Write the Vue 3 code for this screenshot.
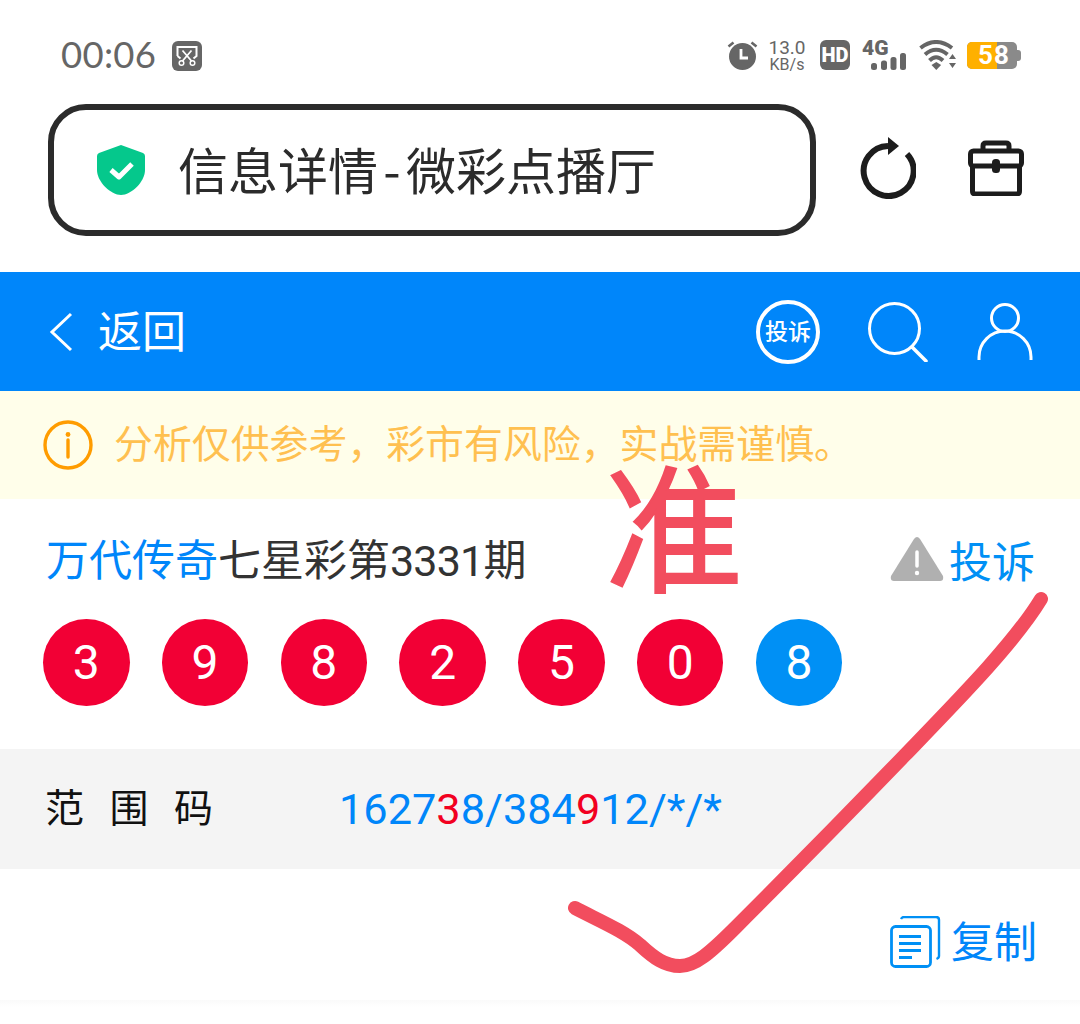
<template>
  <div class="phone">
    <!-- system status bar -->
    <div class="status">
      <span class="clock">00:06</span>
      <svg class="shot" width="30" height="30" viewBox="0 0 30 30">
        <rect width="30" height="30" rx="6" fill="#666" />
        <path d="M5.500 15V6h19v9l-3 2.500M5.500 15l3 2.500" fill="none" stroke="#fff" stroke-width="2" />
        <path d="M10.500 9.500l9 10.500M19.500 9.500l-9 10.500" stroke="#fff" stroke-width="1.800" />
        <circle cx="9.500" cy="22" r="2.300" fill="#666" stroke="#fff" stroke-width="1.500" />
        <circle cx="20.500" cy="22" r="2.300" fill="#666" stroke="#fff" stroke-width="1.500" />
      </svg>
      <div class="spacer"></div>
      <svg class="alarm" width="31" height="30" viewBox="0 0 31 30">
        <circle cx="15.500" cy="16.500" r="13.500" fill="#666" />
        <path d="M1.500 6.500l5-4M29.500 6.500l-5-4" stroke="#666" stroke-width="2.600" />
        <path d="M14 9v9h7" fill="none" stroke="#fff" stroke-width="2.800" />
      </svg>
      <div class="speed"><span>13.0</span><span class="unit">KB/s</span></div>
      <div class="hd">HD</div>
      <div class="net">
        <span class="net-label">4G</span>
        <svg width="44" height="30" viewBox="0 0 44 30">
          <rect x="9" y="23" width="6" height="7" rx="2.500" fill="#666" />
          <rect x="19" y="20.500" width="6" height="9.500" rx="2.500" fill="#666" />
          <rect x="28.500" y="17" width="6" height="13" rx="2.500" fill="#666" />
          <rect x="38" y="13" width="6" height="17" rx="2.500" fill="#666" />
        </svg>
      </div>
      <svg class="wifi" width="38" height="30" viewBox="0 0 38 30">
        <path d="M1.500 8Q17 -4 33 8" fill="none" stroke="#666" stroke-width="4" />
        <path d="M6 14.500Q17 5 28.500 14.500" fill="none" stroke="#666" stroke-width="4" />
        <path d="M10.500 20.500Q17 14 24 20.500" fill="none" stroke="#666" stroke-width="4" />
        <path d="M12.500 25l4.800-3 4.800 3-4.800 5z" fill="#666" />
        <path d="M30 19l3.500-5 3.500 5zM30 23l3.500 5 3.500-5z" fill="#666" />
      </svg>
      <div class="battery">
        <div class="cell"><div class="level"></div><span class="pct">58</span></div>
        <div class="nub"></div>
      </div>
    </div>

    <!-- browser address row -->
    <div class="browser">
      <div class="address">
        <svg width="48" height="50" viewBox="0 0 48 50">
          <path d="M24 0L46 8q2 1 2 3v14c0 12-14 25-24 25S0 37 0 25V11q0-2 2-3z" fill="#05c88c" />
          <path d="M14 25l8 7 13-13" fill="none" stroke="#fff" stroke-width="5" stroke-linejoin="round" />
        </svg>
        <span class="page-title">信息详情<span class="dash">-</span>微彩点播厅</span>
      </div>
      <svg class="reload" width="56" height="62" viewBox="0 0 56 62">
        <path d="M47 17A25 25 0 1 1 28 9" fill="none" stroke="#1c1c1c" stroke-width="6" />
        <path d="M28 0l11 9-11 9z" fill="#1c1c1c" />
      </svg>
      <svg class="toolbox" width="56" height="56" viewBox="0 0 56 56">
        <path d="M15 11V6q0-3 3-3h20q3 0 3 3v5" fill="none" stroke="#1c1c1c" stroke-width="5" />
        <rect x="2.500" y="11" width="51" height="15" rx="3" fill="none" stroke="#1c1c1c" stroke-width="5" />
        <path d="M4.500 26v25q0 3 3 3h41q3 0 3-3V26" fill="none" stroke="#1c1c1c" stroke-width="5" />
        <rect x="24" y="19" width="8" height="14" rx="3.500" fill="#1c1c1c" />
      </svg>
    </div>

    <!-- page header -->
    <header class="nav">
      <svg width="26" height="40" viewBox="0 0 26 40">
        <path d="M23 2L4 20l19 18" fill="none" stroke="#fff" stroke-width="3" />
      </svg>
      <span class="back">返回</span>
      <div class="spacer"></div>
      <div class="badge">投诉</div>
      <svg class="search" width="60" height="60" viewBox="0 0 60 60">
        <circle cx="26.500" cy="26.500" r="25" fill="none" stroke="#fff" stroke-width="3" />
        <path d="M44 45l14 14" stroke="#fff" stroke-width="3.500" stroke-linecap="round" />
      </svg>
      <svg class="user" width="56" height="58" viewBox="0 0 56 58">
        <circle cx="28" cy="15" r="13.500" fill="none" stroke="#fff" stroke-width="3" />
        <path d="M2 57v-3a26 26 0 0 1 52 0v3" fill="none" stroke="#fff" stroke-width="3" />
      </svg>
    </header>

    <div class="notice">
      <svg width="50" height="50" viewBox="0 0 50 50">
        <circle cx="25" cy="25" r="23" fill="none" stroke="#ff9c00" stroke-width="3.400" />
        <circle cx="25" cy="14.500" r="2.400" fill="#ff9c00" />
        <path d="M25 20v17" stroke="#ff9c00" stroke-width="3.400" stroke-linecap="round" />
      </svg>
      <span>分析仅供参考，彩市有风险，实战需谨慎。</span>
    </div>

    <!-- draw result -->
    <section class="draw">
      <div class="draw-head">
        <div class="draw-title"><span class="blue">万代传奇</span>七星彩第<span class="issue">3331</span>期</div>
        <svg width="54" height="44" viewBox="0 0 54 44">
          <path d="M24 2q3-4 6 0l23 37q1 5-3 5H4q-4 0-3-5z" fill="#b0b0b0" />
          <path d="M27 15v14" stroke="#fff" stroke-width="3.500" stroke-linecap="round" />
          <circle cx="27" cy="36" r="2.200" fill="#fff" />
        </svg>
        <span class="report">投诉</span>
      </div>
      <div class="balls">
        <div v-for="(n, i) in balls" :key="i" class="ball" :class="{ last: i === balls.length - 1 }">{{ n }}</div>
      </div>
    </section>

    <div class="range">
      <span class="range-label">范围码</span>
      <span class="range-value">1627<em>3</em>8/384<em>9</em>12/*/*</span>
    </div>

    <div class="copy-row">
      <svg width="51" height="52" viewBox="0 0 51 52">
        <path d="M11 3q1-2 3-2h32q3 0 3 3v36q0 2-2.500 3" fill="none" stroke="#0090f5" stroke-width="2.400" />
        <rect x="1.500" y="10.500" width="39" height="40" rx="4" fill="none" stroke="#0090f5" stroke-width="2.800" />
        <path d="M9 20.500h22M9 27.500h22M9 34.500h22M9 41.500h13" stroke="#0090f5" stroke-width="2.800" />
      </svg>
      <span>复制</span>
    </div>
    <div class="divider"></div>

    <!-- handwritten markup layered over the page -->
    <span class="ink-mark">准</span>
    <svg class="ink" width="1080" height="1024" viewBox="0 0 1080 1024">
      <path
        d="M575 908C600 921 624 931 640 945C654 958 665 966 680 966C695 966 710 953 735 928C790 873 850 812 905 755C960 698 1015 642 1041 599"
        fill="none"
        stroke="#f24d5e"
        stroke-width="14"
        stroke-linecap="round"
        stroke-linejoin="round"
      />
    </svg>
  </div>
</template>

<script setup>
const balls = [3, 9, 8, 2, 5, 0, 8]
</script>

<style>
html,
body {
  background: #fff;
}
</style>

<style scoped>
.phone {
  position: relative;
  width: 1080px;
  height: 1024px;
  overflow: hidden;
  background: #fff;
  font-family: Roboto, "Noto Sans CJK SC", sans-serif;
}
.spacer {
  flex: 1;
}
.status {
  display: flex;
  align-items: center;
  box-sizing: border-box;
  height: 104px;
  padding: 6px 59px 0 61px;
  color: #666;
}
.clock {
  width: 111px;
  margin-top: -2px;
  font-family: Lato, sans-serif;
  font-size: 36.500px;
  letter-spacing: 0.300px;
}
.shot {
  margin-top: 2px;
}
.alarm {
  margin-right: 10px;
}
.speed {
  display: flex;
  flex-direction: column;
  align-items: center;
  width: 38px;
  margin-right: 14px;
  font-size: 19px;
  line-height: 18px;
}
.speed .unit {
  font-size: 16px;
  line-height: 15px;
}
.hd {
  width: 30px;
  height: 30px;
  margin-right: 12px;
  border-radius: 6px;
  background: #666;
  color: #fff;
  font-size: 20px;
  font-weight: 900;
  line-height: 30px;
  text-align: center;
}
.net {
  position: relative;
  width: 44px;
  height: 30px;
  margin-right: 13px;
}
.net-label {
  position: absolute;
  left: 0;
  top: -4px;
  font-size: 21px;
  font-weight: 900;
  line-height: 24px;
}
.wifi {
  margin-right: 10px;
}
.battery {
  display: flex;
  align-items: center;
}
.cell {
  position: relative;
  width: 50px;
  height: 27px;
  border-radius: 5px;
  background: #8a8a8a;
}
.level {
  width: 30px;
  height: 27px;
  border-radius: 5px 0 0 5px;
  background: #ffb000;
}
.pct {
  position: absolute;
  left: 11px;
  top: 0;
  color: #fff;
  font-size: 26px;
  font-weight: 700;
  letter-spacing: 1px;
  line-height: 27px;
}
.nub {
  width: 4px;
  height: 11px;
  border-radius: 0 3px 3px 0;
  background: #8a8a8a;
}
.browser {
  display: flex;
  align-items: center;
  height: 132px;
  margin-bottom: 36px;
  padding-left: 48px;
}
.address {
  display: flex;
  align-items: center;
  box-sizing: border-box;
  width: 768px;
  height: 132px;
  padding-left: 43px;
  border: 6px solid #2b2b2b;
  border-radius: 38px;
}
.page-title {
  margin-left: 33px;
  margin-top: -4px;
  color: #2b2b2b;
  font-family: "Noto Sans CJK SC", sans-serif;
  font-size: 50px;
  white-space: nowrap;
}
.dash {
  display: inline-block;
  width: 28px;
  text-align: center;
}
.reload {
  margin-left: 44px;
  margin-top: -4px;
}
.toolbox {
  margin-left: 52px;
  margin-top: -4px;
}
.nav {
  display: flex;
  align-items: center;
  box-sizing: border-box;
  height: 119px;
  padding: 0 47px 0 48px;
  background: #0086fa;
  color: #fff;
}
.back {
  margin-left: 24px;
  margin-top: -6px;
  font-size: 44px;
}
.badge {
  box-sizing: border-box;
  width: 64px;
  height: 64px;
  border: 4px solid #fff;
  border-radius: 50%;
  font-size: 23px;
  font-weight: 500;
  line-height: 58px;
  text-align: center;
}
.search {
  margin-left: 48px;
}
.user {
  margin-left: 49px;
}
.notice {
  display: flex;
  align-items: center;
  height: 108px;
  padding-left: 43px;
  background: #fffeea;
  color: #ffc050;
  font-size: 38.900px;
}
.notice span {
  margin-left: 21px;
  margin-top: -8px;
  white-space: nowrap;
}
.draw {
  height: 250px;
  padding: 0 45px 0 43px;
}
.draw-head {
  display: flex;
  align-items: center;
  height: 120px;
  color: #333;
  font-size: 43px;
}
.draw-title {
  flex: 1;
  margin-left: 3px;
  margin-top: -4px;
}
.issue {
  letter-spacing: -0.800px;
}
.blue {
  color: #0086fa;
}
.report {
  margin-left: 5px;
  color: #0090f5;
}
.balls {
  display: flex;
  gap: 32.300px;
}
.ball {
  width: 86.500px;
  height: 87px;
  border-radius: 50%;
  background: #f20035;
  color: #fff;
  font-size: 48px;
  line-height: 87px;
  text-align: center;
}
.ball.last {
  background: #0090f5;
}
.range {
  display: flex;
  align-items: center;
  height: 120px;
  padding-left: 45px;
  background: #f4f4f4;
}
.range-label {
  width: 294px;
  margin-top: -8px;
  color: #111;
  font-size: 39px;
  letter-spacing: 25.500px;
  white-space: nowrap;
}
.range-value {
  color: #0086fa;
  font-size: 43.300px;
}
.range-value em {
  color: #f20020;
  font-style: normal;
}
.copy-row {
  display: flex;
  align-items: center;
  justify-content: flex-end;
  box-sizing: border-box;
  height: 131px;
  padding: 14px 43px 0 0;
  color: #0086fa;
  font-size: 43px;
}
.copy-row span {
  margin-left: 10px;
  margin-top: -6px;
}
.divider {
  height: 7px;
  background: linear-gradient(#fafafa, #fff);
}
.ink-mark {
  position: absolute;
  left: 605px;
  top: 423px;
  color: #f24d5e;
  font-family: "Noto Sans CJK SC", sans-serif;
  font-size: 138px;
  font-weight: 400;
  -webkit-text-stroke: 2px #f24d5e;
  line-height: 196px;
}
.ink {
  position: absolute;
  left: 0;
  top: 0;
  pointer-events: none;
}
</style>
